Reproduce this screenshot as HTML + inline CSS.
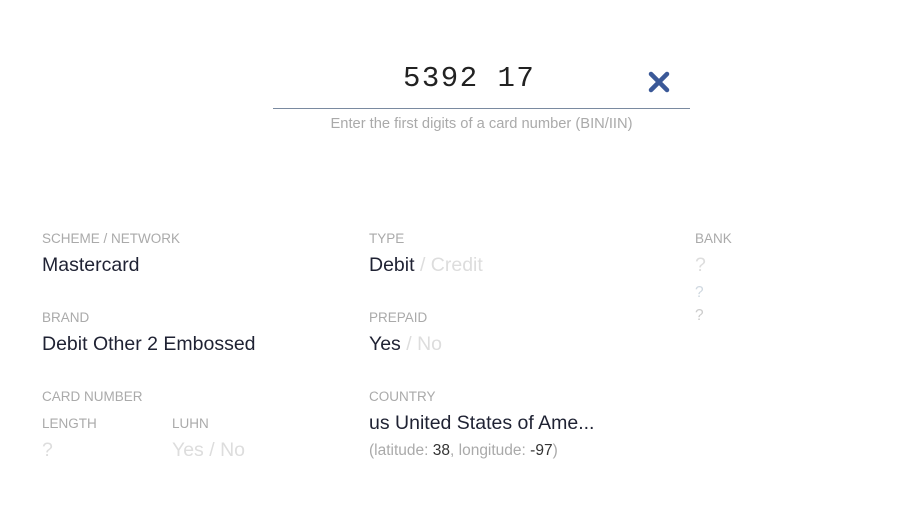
<!DOCTYPE html>
<html><head><meta charset="utf-8"><style>
*{margin:0;padding:0;box-sizing:border-box}
body{width:909px;height:509px;background:#fff;font-family:"Liberation Sans",sans-serif;position:relative;overflow:hidden}
.a{position:absolute;white-space:nowrap}
.l{font-size:13.5px;color:#aaa}
.v{font-size:19.5px;color:#1f2233}
.g{color:#ddd}
.s{font-size:15.5px;color:#aaa}
</style></head><body>
<div class="a" style="left:403px;top:62px;font-family:'Liberation Mono',monospace;font-size:29px;color:#222;letter-spacing:1.5px">5392 17</div>
<svg class="a" style="left:648px;top:71px" width="22" height="22" viewBox="0 0 22 22"><path d="M3 3L19 19M19 3L3 19" stroke="#3b5998" stroke-width="4.5" stroke-linecap="round"/></svg>
<div class="a" style="left:273px;top:108px;width:417px;height:1px;background:#7a8aa0"></div>
<div class="a" style="left:273px;top:116px;width:417px;text-align:center;font-size:14.7px;color:#aaa">Enter the first digits of a card number (BIN/IIN)</div>

<div class="a l" style="left:42px;top:231px">SCHEME / NETWORK</div>
<div class="a v" style="left:42px;top:254px">Mastercard</div>
<div class="a l" style="left:42px;top:310px">BRAND</div>
<div class="a v" style="left:42px;top:333px">Debit Other 2 Embossed</div>
<div class="a l" style="left:42px;top:389px">CARD NUMBER</div>
<div class="a l" style="left:42px;top:416px">LENGTH</div>
<div class="a l" style="left:172px;top:416px">LUHN</div>
<div class="a v g" style="left:42px;top:439px">?</div>
<div class="a v g" style="left:172px;top:439px">Yes / No</div>

<div class="a l" style="left:369px;top:231px">TYPE</div>
<div class="a v" style="left:369px;top:254px">Debit <span class="g">/ Credit</span></div>
<div class="a l" style="left:369px;top:310px">PREPAID</div>
<div class="a v" style="left:369px;top:333px">Yes <span class="g">/ No</span></div>
<div class="a l" style="left:369px;top:389px">COUNTRY</div>
<div class="a v" style="left:369px;top:412px">us United States of Ame...</div>
<div class="a s" style="left:369px;top:442px">(latitude: <span style="color:#333">38</span>, longitude: <span style="color:#333">-97</span>)</div>

<div class="a l" style="left:695px;top:231px">BANK</div>
<div class="a v g" style="left:695px;top:254px">?</div>
<div class="a s" style="left:695px;top:284px;color:#cfd8e0">?</div>
<div class="a s" style="left:695px;top:307px;color:#ccc">?</div>
</body></html>
